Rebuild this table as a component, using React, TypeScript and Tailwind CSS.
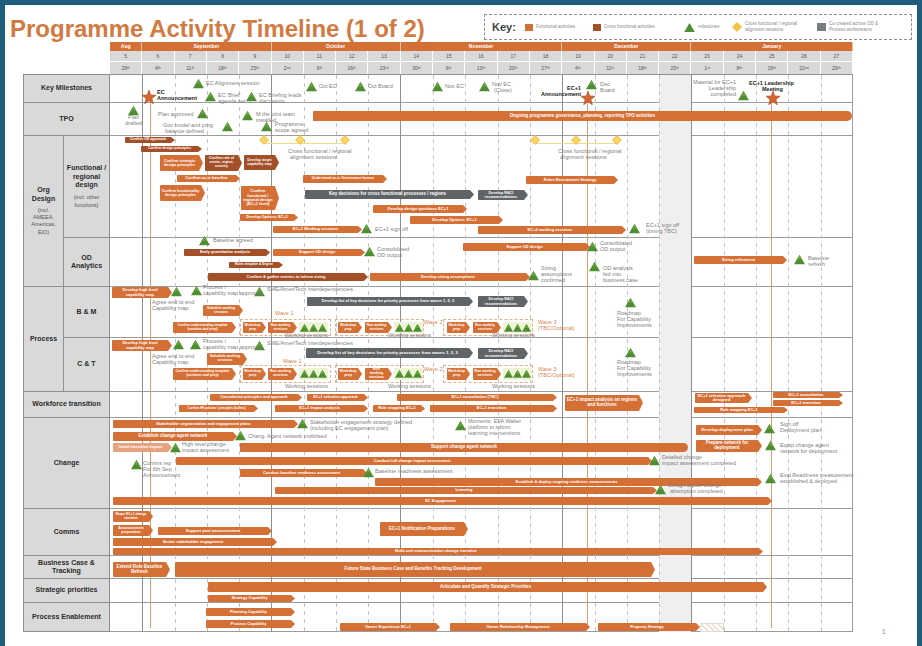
import React from 'react';

const X0 = 110;
const Y0 = 75;
const TW = 743;
const CW = TW / 23;

type C = 'o' | 'b' | 'g' | 'l';
type S = 'a' | 'r' | 'f';
type Bar = [number, number, number, number, C, string, S?];
type Txt = [number, number, string, ('g' | 'k' | 'o' | 'R')?];
type Pt = [number, number, number?];

const colorCls: Record<C, string> = {
  o: 'bg-[#d46f36]',
  b: 'bg-[#a34f28]',
  g: 'bg-[#606467]',
  l: 'bg-[#e6a27e]',
};

const months: [string, number][] = [
  ['Aug', 1],
  ['September', 4],
  ['October', 4],
  ['November', 5],
  ['December', 4],
  ['January', 5],
];
const spanCls: Record<number, string> = { 1: 'col-span-1', 4: 'col-span-4', 5: 'col-span-5' };
const weeks = Array.from({ length: 23 }, (_, i) => i + 5);
const dates: [string, string][] = [
  ['28', 'th'], ['4', 'th'], ['11', 'th'], ['18', 'th'], ['25', 'th'], ['2', 'nd'], ['9', 'th'], ['16', 'th'],
  ['23', 'rd'], ['30', 'th'], ['6', 'th'], ['13', 'th'], ['20', 'th'], ['27', 'th'], ['4', 'th'], ['11', 'th'],
  ['18', 'th'], ['25', 'th'], ['1', 'st'], ['8', 'th'], ['15', 'th'], ['22', 'nd'], ['29', 'th'],
];

const waveRow = (y1: number, y2: number): Bar[] => [
  [173, 236, y1, y2, 'o', 'Confirm understanding template (contains and prep)'],
  [243, 266, y1, y2, 'o', 'Workshop prep'],
  [268, 297, y1, y2, 'o', 'Run working sessions'],
  [338, 362, y1, y2, 'o', 'Workshop prep'],
  [365, 392, y1, y2, 'o', 'Run working sessions'],
  [447, 470, y1, y2, 'o', 'Workshop prep'],
  [473, 501, y1, y2, 'o', 'Run working sessions'],
];
const waveTris = (y: number): Pt[] => [304, 313, 322, 399, 408, 417, 508, 517, 526].map((x) => [x, y, 9] as Pt);
const waveBoxes = (y1: number, y2: number): [number, number, number, number][] =>
  [[240, 331], [335, 424], [443, 533]].map(([a, b]) => [a, b, y1 - 3, y2 + 3] as [number, number, number, number]);
const waveGreen = (y1: number, y2: number): [number, number, number, number][] =>
  [[299, 328], [394, 423], [503, 532]].map(([a, b]) => [a, b, y1, y2] as [number, number, number, number]);

const bars: Bar[] = [
  // TPO
  [313, 852, 111, 121, 'o', 'Ongoing programme governance, planning, reporting TPO activities', 'r'],
  // Functional / regional design
  [125, 175, 137, 143, 'b', 'Confirm OD approach'],
  [141, 202, 146, 152, 'b', 'Confirm design principles'],
  [160, 203, 155, 171, 'o', 'Confirm strategic design principles'],
  [205, 242, 155, 171, 'b', 'Confirm role of centre, region, country'],
  [244, 279, 155, 170, 'b', 'Develop target capability map'],
  [177, 240, 175, 182, 'o', 'Confirm as-is baseline'],
  [160, 205, 185, 201, 'o', 'Confirm functionality design principles'],
  [241, 279, 186, 210, 'o', 'Confirm functional / regional design (EC+1 level)'],
  [240, 298, 214, 221, 'o', 'Develop Options: EC+1'],
  [273, 362, 226, 233, 'o', 'EC+1 Working sessions'],
  [303, 387, 175, 183, 'o', 'Understand as-is Governance forums'],
  [305, 474, 190, 199, 'g', 'Key decisions for cross functional processes / regions'],
  [478, 528, 190, 200, 'g', 'Develop RACI recommendations'],
  [373, 467, 205, 213, 'o', 'Develop design questions EC+1'],
  [410, 503, 216, 224, 'o', 'Develop Options: EC+1'],
  [478, 626, 226, 234, 'o', 'EC+2 working sessions'],
  [526, 618, 176, 184, 'o', 'Roles Recruitment Strategy'],
  // OD analytics
  [184, 270, 249, 256, 'b', 'Early quantitative analysis'],
  [273, 365, 249, 256, 'o', 'Support OD design'],
  [229, 283, 262, 268, 'b', 'Rules template & Engine'],
  [208, 368, 273, 281, 'b', 'Confirm & gather metrics to inform sizing'],
  [370, 530, 273, 281, 'o', 'Develop sizing assumptions'],
  [463, 590, 243, 251, 'o', 'Support OD design'],
  [694, 787, 256, 264, 'o', 'Sizing refinement'],
  // B & M
  [112, 172, 287, 298, 'o', 'Develop high level capability map'],
  [203, 243, 305, 316, 'o', 'Schedule working sessions'],
  [307, 473, 297, 306, 'g', 'Develop list of key decisions for priority processes from waves 1, 2, 3'],
  [478, 528, 296, 307, 'g', 'Develop RACI recommendations'],
  ...waveRow(322, 333),
  // C & T
  [112, 172, 340, 351, 'o', 'Develop high level capability map'],
  [207, 247, 353, 365, 'o', 'Schedule working sessions'],
  [306, 473, 348, 358, 'g', 'Develop list of key decisions for priority processes from waves 1, 2, 3'],
  [478, 528, 348, 359, 'g', 'Develop RACI recommendations'],
  ...waveRow(368, 380),
  // Workforce transition
  [210, 302, 394, 401, 'o', 'Consultation principles and approach'],
  [307, 368, 394, 401, 'o', 'EC+1 selection approach'],
  [397, 557, 394, 401, 'o', 'EC+1 consultation (TBC)'],
  [179, 258, 405, 412, 'o', 'Confirm HR policies / principles (bullets)'],
  [275, 368, 405, 412, 'o', 'EC+1 impact analysis'],
  [373, 425, 405, 412, 'o', 'Role mapping EC+1'],
  [430, 557, 405, 412, 'o', 'EC+1 transition'],
  [565, 643, 395, 411, 'o', 'EC+1 impact analysis on regions and functions'],
  [695, 752, 393, 403, 'o', 'EC+1 selection approach designed'],
  [694, 788, 407, 413, 'o', 'Role mapping EC+1'],
  [773, 843, 392, 398, 'o', 'EC+1 consultation'],
  [773, 843, 400, 406, 'o', 'EC+1 transition'],
  // Change
  [113, 298, 420, 428, 'o', 'Stakeholder segmentation and engagement plans'],
  [113, 237, 432, 441, 'o', 'Establish change agent network'],
  [113, 172, 443, 452, 'l', 'Initial transition impact'],
  [240, 688, 443, 452, 'o', 'Support change agent network', 'r'],
  [176, 652, 457, 465, 'o', 'Conduct full change impact assessment'],
  [240, 367, 469, 477, 'o', 'Conduct baseline readiness assessment'],
  [375, 762, 478, 486, 'o', 'Establish & deploy ongoing readiness measurements'],
  [275, 657, 487, 494, 'o', 'Learning'],
  [113, 772, 497, 505, 'o', 'EC Engagement'],
  [696, 762, 425, 435, 'o', 'Develop deployment plan'],
  [696, 762, 440, 452, 'o', 'Prepare network for deployment'],
  // Comms
  [113, 153, 511, 522, 'o', 'Shape EC+1 change narrative'],
  [113, 153, 525, 536, 'o', 'Announcement preparation'],
  [158, 272, 527, 535, 'o', 'Support post announcement'],
  [113, 277, 538, 546, 'o', 'Senior stakeholder engagement'],
  [380, 468, 522, 536, 'o', 'EC+1 Notification Preparations'],
  [113, 763, 548, 555, 'o', 'Multi-unit communication change narrative'],
  // Business case
  [113, 170, 562, 577, 'o', 'Extend Role Baseline Refresh'],
  [175, 655, 562, 577, 'o', 'Future State Business Case and Benefits Tracking Development'],
  // Strategic priorities
  [208, 767, 582, 592, 'o', 'Articulate and Quantify Strategic Priorities'],
  [208, 295, 595, 602, 'o', 'Strategy Capability'],
  // Process enablement
  [206, 295, 608, 616, 'o', 'Planning Capability'],
  [206, 295, 620, 628, 'o', 'Process Capability'],
  [340, 440, 623, 631, 'o', 'Owner Experience EC+1'],
  [450, 590, 623, 631, 'o', 'Owner Relationship Management'],
  [598, 700, 623, 631, 'o', 'Property Strategy'],
];

const tris: Pt[] = [
  [198, 84], [210, 97], [251, 97], [311, 87], [360, 87], [437, 87], [484, 87], [591, 85], [743, 96],
  [133, 111], [202, 114], [247, 116], [227, 127], [266, 127],
  [366, 229], [634, 229],
  [204, 241], [369, 252], [592, 247], [594, 267], [533, 276], [799, 260],
  [176, 292], [196, 291], [259, 292], [630, 303],
  [178, 345], [195, 345], [259, 346], [630, 353],
  ...waveTris(328),
  ...waveTris(374),
  [302, 424], [240, 436], [175, 448], [136, 465], [460, 426], [654, 461], [368, 473], [660, 490],
  [769, 429], [770, 446], [770, 479],
];

const stars: [number, number][] = [[149, 97], [588, 98], [773, 98]];
const diamonds: [number, number][] = [[264, 140], [300, 140], [345, 140], [535, 140], [576, 140], [617, 140]];

const texts: Txt[] = [
  [206, 81, 'EC Alignment session'],
  [157, 90, 'EC', 'k'], [157, 96, 'Announcement', 'k'],
  [218, 93, "EC 'Brief'"], [218, 99, 'agenda set'],
  [259, 93, 'EC Briefing leads'], [259, 99, 'discussion'],
  [319, 84, 'Oct EC'], [368, 84, 'Oct Board'], [445, 84, 'Nov EC'], [492, 82, 'Nov EC'], [494, 88, '(Close)'],
  [567, 86, 'EC+1', 'k'], [541, 92, 'Announcement', 'k'],
  [600, 82, 'Dec'], [600, 88, 'Board'],
  [736, 80, 'Material for EC+1', 'R'], [736, 86, 'Leadership', 'R'], [736, 92, 'completed', 'R'],
  [749, 81, 'EC+1 Leadership', 'k'], [762, 87, 'Meeting', 'k'],
  [128, 115, 'Plan'], [125, 121, 'drafted'],
  [158, 112, 'Plan approved'],
  [256, 112, 'M the joint team'], [256, 118, 'installed'],
  [163, 123, 'Gov model and prog'], [165, 129, 'balance defined'],
  [275, 122, 'Programme'], [275, 128, 'scope agreed'],
  [288, 149, 'Cross functional / regional'], [290, 155, 'alignment sessions'],
  [558, 149, 'Cross functional / regional'], [560, 155, 'alignment sessions'],
  [375, 227, 'EC+1 sign off'],
  [646, 223, 'EC+1 sign off'], [646, 229, '(timing TBC)'],
  [213, 238, 'Baseline agreed'],
  [377, 247, 'Consolidated'], [377, 253, 'OD output'],
  [600, 241, 'Consolidated'], [600, 247, 'OD output'],
  [541, 266, 'Sizing'], [541, 272, 'assumptions'], [541, 278, 'confirmed'],
  [603, 266, 'OD analysis'], [603, 272, 'fed into'], [603, 278, 'business case'],
  [808, 256, 'Baseline'], [808, 262, 'refresh'],
  [203, 285, 'Process /'], [203, 291, 'capability map approved'],
  [267, 287, 'SME/AmeriTech interdependencies'],
  [152, 300, 'Agree end to end'], [152, 306, 'Capability map'],
  [275, 311, 'Wave 1', 'o'], [424, 320, 'Wave 2', 'o'], [538, 320, 'Wave 3', 'o'], [538, 326, '(TBC/Optional)', 'o'],
  [285, 333, 'Working sessions'], [388, 333, 'Working sessions'], [492, 333, 'Working sessions'],
  [617, 311, 'Roadmap'], [617, 317, 'For Capability'], [617, 323, 'Improvements'],
  [203, 339, 'Process /'], [203, 345, 'capability map approved'],
  [267, 341, 'SME/AmeriTech interdependencies'],
  [152, 354, 'Agree end to end'], [152, 360, 'Capability map'],
  [283, 359, 'Wave 1', 'o'], [424, 367, 'Wave 2', 'o'], [538, 367, 'Wave 3', 'o'], [538, 373, '(TBC/Optional)', 'o'],
  [285, 384, 'Working sessions'], [388, 384, 'Working sessions'], [492, 384, 'Working sessions'],
  [617, 360, 'Roadmap'], [617, 366, 'For Capability'], [617, 372, 'Improvements'],
  [310, 420, 'Stakeholder engagement strategy defined'], [310, 426, '(including EC engagement plan)'],
  [248, 434, 'Chang. Agent network mobilised'],
  [182, 442, 'High level change'], [182, 448, 'impact assessment'],
  [143, 461, 'Comms rep'], [143, 467, 'For 6th Sep'], [143, 473, 'Announcement'],
  [468, 419, 'Moments: EVA Walter'], [468, 425, 'platform to inform'], [468, 431, 'learning interventions'],
  [662, 455, 'Detailed change'], [662, 461, 'impact assessment completed'],
  [375, 469, 'Baseline readiness assessment'],
  [668, 483, 'Design & plan change'], [670, 489, 'absorption completed'],
  [780, 422, 'Sign off'], [780, 428, 'Deployment plan'],
  [780, 443, 'Equip change agent'], [780, 449, 'network for deployment'],
  [780, 473, 'Eval Readiness measurement'], [780, 479, 'established & deployed'],
];

function fitSize(t: string, w: number, h: number, pad: number): number {
  for (let fs = 4.5; fs > 2.6; fs -= 0.25) {
    const lines = Math.max(1, Math.floor(h / (fs * 1.12)));
    const need = t.length * fs * 0.56;
    const factor = lines > 1 ? 0.72 : 0.92;
    if (need <= (w - pad) * lines * factor) return fs;
  }
  return 2.75;
}

function BarEl({ b }: { b: Bar }) {
  const [x1, x2, y1, y2, c, t, s = 'a'] = b;
  const h = y2 - y1;
  const w = x2 - x1;
  const shape =
    s === 'a'
      ? '[clip-path:polygon(0_0,calc(100%_-_4px)_0,100%_50%,calc(100%_-_4px)_100%,0_100%)] pr-[5px] pl-[1px] rounded-l-[1px]'
      : s === 'r'
      ? 'rounded-r-[6px] rounded-l-[1px] px-[2px]'
      : 'px-[1px]';
  const fs = Math.min(h < 9 ? 4 : 4.5, fitSize(t, w, h, s === 'a' ? 7 : 4));
  return (
    <div
      className={`absolute flex items-center justify-center overflow-hidden text-center font-bold leading-[1.1] text-white ${colorCls[c]} ${shape}`}
      style={{ left: x1 - X0, top: y1 - Y0, width: w, height: h, fontSize: fs }}
    >
      {t}
    </div>
  );
}

function TxtEl({ t }: { t: Txt }) {
  const [x, y, s, k = 'g'] = t;
  const cls =
    k === 'k'
      ? 'font-bold text-[#222222] text-[5.5px]'
      : k === 'o'
      ? 'text-[#d9824f] text-[5.5px]'
      : 'text-[#808080] text-[5.5px]';
  const style = k === 'R' ? { right: TW - (x - X0), top: y - Y0 } : { left: x - X0, top: y - Y0 };
  return (
    <div className={`absolute whitespace-nowrap leading-none ${cls}`} style={style}>
      {s}
    </div>
  );
}

function Tri({ p }: { p: Pt }) {
  const [x, y, w = 11] = p;
  const h = w * 0.85;
  return (
    <svg className="absolute" style={{ left: x - X0 - w / 2, top: y - Y0 - h / 2 }} width={w} height={h} viewBox="0 0 10 8.5">
      <path d="M5 0 L10 8.5 L0 8.5Z" fill="#4f8d31" />
      <path d="M5 0 L7.5 4.25 L2.5 4.25Z" fill="#62a23f" />
    </svg>
  );
}

function Star({ x, y }: { x: number; y: number }) {
  return (
    <svg className="absolute" style={{ left: x - X0 - 7, top: y - Y0 - 7 }} width="14" height="14" viewBox="0 0 12 12">
      <polygon
        points="6,0 7.5,4.2 12,4.5 8.5,7.3 9.7,11.8 6,9.2 2.3,11.8 3.5,7.3 0,4.5 4.5,4.2"
        fill="#d5652f"
        stroke="#a8461c"
        strokeWidth="0.5"
      />
    </svg>
  );
}

function Diamond({ x, y }: { x: number; y: number }) {
  return (
    <svg className="absolute" style={{ left: x - X0 - 5, top: y - Y0 - 5 }} width="10" height="10" viewBox="0 0 10 10">
      <polygon points="5,0 10,5 5,10 0,5" fill="#f4c445" />
      <polygon points="5,1.5 8.5,5 5,8.5 1.5,5" fill="#f8d66a" />
    </svg>
  );
}

function Key() {
  return (
    <div className="ml-auto mr-[5px] mt-[9px] flex h-[26px] w-[428px] items-center border border-dashed border-[#8f8f8f] pl-[7px] text-[4.5px] leading-[1.25] text-[#8a8a8a]">
      <span className="w-[33px] text-[11px] font-bold leading-none text-[#404040]">Key:</span>
      <span className="h-[7px] w-[8px] bg-[#d46f36]" />
      <span className="ml-[3px] w-[57px]">Functional activities</span>
      <span className="h-[7px] w-[8px] bg-[#a34f28]" />
      <span className="ml-[3px] w-[80px]">Cross functional activities</span>
      <svg width="11" height="9" viewBox="0 0 10 8.5">
        <path d="M5 0 L10 8.5 L0 8.5Z" fill="#4f8d31" />
      </svg>
      <span className="ml-[3px] w-[34px]">milestones</span>
      <svg width="10" height="10" viewBox="0 0 10 10">
        <polygon points="5,0 10,5 5,10 0,5" fill="#f4c445" />
      </svg>
      <span className="ml-[3px] w-[72px]">
        Cross functional / regional
        <br />
        alignment sessions
      </span>
      <span className="h-[8px] w-[9px] bg-[#7a7d80]" />
      <span className="ml-[3px]">
        Co-created across OD &amp;
        <br />
        Process workstreams
      </span>
    </div>
  );
}

function Header() {
  return (
    <div className="flex flex-col">
      <div className="flex h-[9px]">
        <div className="w-[87px]" />
        <div className="grid w-[743px] grid-cols-[repeat(23,minmax(0,1fr))] bg-[#d46f36]">
          {months.map(([m, n]) => (
            <div key={m} className={`${spanCls[n]} border-r border-[#f0c0a0] text-center text-[5px] font-bold leading-[9px] text-white`}>
              {m}
            </div>
          ))}
        </div>
      </div>
      <div className="flex h-[11px]">
        <div className="w-[87px]" />
        <div className="grid w-[743px] grid-cols-[repeat(23,minmax(0,1fr))]">
          {weeks.map((w) => (
            <div key={w} className="border-r border-b border-white bg-[#d9d9d9] text-center text-[5px] leading-[10px] text-[#555555]">
              {w}
            </div>
          ))}
        </div>
      </div>
      <div className="flex h-[12px]">
        <div className="w-[87px]" />
        <div className="grid w-[743px] grid-cols-[repeat(23,minmax(0,1fr))]">
          {dates.map(([d, s], i) => (
            <div key={i} className="border-r border-white bg-[#d9d9d9] text-center text-[5px] leading-[12px] text-[#555555]">
              {d}
              <span className="align-top text-[3.5px]">{s}</span>
            </div>
          ))}
        </div>
      </div>
    </div>
  );
}

const lab = 'flex flex-col items-center justify-center text-center bg-[#d9d9d9] border-r border-b border-[#8f8f8f] text-[7px] font-bold text-[#2b2b2b] leading-[1.2]';
const rowStarts = [
  'row-start-1', 'row-start-2', 'row-start-3', 'row-start-4', 'row-start-5', 'row-start-6',
  'row-start-7', 'row-start-8', 'row-start-9', 'row-start-10', 'row-start-11', 'row-start-12',
];

function Overlay() {
  const monthBounds = [1, 5, 9, 14, 18];
  return (
    <div className="pointer-events-none absolute left-[87px] top-0 bottom-0 w-[743px]">
      <div className="absolute top-0 bottom-0 bg-[#efefef]" style={{ left: 17 * CW, width: CW }} />
      {Array.from({ length: 22 }, (_, i) => i + 1).map((i) =>
        monthBounds.includes(i) ? (
          <div key={i} className="absolute top-0 bottom-0 w-[1.5px] bg-[#8e8e8e]" style={{ left: i * CW - 0.75 }} />
        ) : (
          <div
            key={i}
            className="absolute top-0 bottom-0 w-px bg-[repeating-linear-gradient(to_bottom,#c4c4c4_0_4px,transparent_4px_8px)]"
            style={{ left: i * CW }}
          />
        )
      )}
      {[150, 587, 771].map((x) => (
        <div key={x} className="absolute w-px bg-[#df9b72]" style={{ left: x - X0, top: 103 - Y0, height: 525 }} />
      ))}
      {[[264, 345], [535, 617]].map(([a, b]) => (
        <div key={a} className="absolute h-px bg-[#f3d98a]" style={{ left: a - X0, width: b - a, top: 143 - Y0 }} />
      ))}
      {[...waveBoxes(322, 333), ...waveBoxes(368, 380)].map(([a, b, c, d], i) => (
        <div
          key={'wb' + i}
          className="absolute border border-dashed border-[#e6b08c]"
          style={{ left: a - X0, width: b - a, top: c - Y0, height: d - c }}
        />
      ))}
      {[...waveGreen(322, 333), ...waveGreen(368, 380)].map(([a, b, c, d], i) => (
        <div key={'wg' + i} className="absolute bg-[#eef5d6]" style={{ left: a - X0, width: b - a, top: c - Y0, height: d - c }} />
      ))}
      <div
        className="absolute border border-[#dddddd] bg-[repeating-linear-gradient(45deg,#f3e3d8_0_2px,#ffffff_2px_4px)]"
        style={{ left: 700 - X0, width: 24, top: 623 - Y0, height: 9 }}
      />
      {bars.map((b, i) => (
        <BarEl key={'b' + i} b={b} />
      ))}
      {diamonds.map(([x, y], i) => (
        <Diamond key={'d' + i} x={x} y={y} />
      ))}
      {tris.map((p, i) => (
        <Tri key={'t' + i} p={p} />
      ))}
      {stars.map(([x, y], i) => (
        <Star key={'s' + i} x={x} y={y} />
      ))}
      {texts.map((t, i) => (
        <TxtEl key={'x' + i} t={t} />
      ))}
    </div>
  );
}

function Body() {
  return (
    <div className="relative grid w-[830px] grid-cols-[41px_46px_743px] grid-rows-[28px_33px_102px_49px_51px_54px_26px_91px_47px_23px_24px_29px] border-t border-[#8f8f8f]">
      <div className={`${lab} col-span-2 col-start-1 row-start-1 border-l`}>Key Milestones</div>
      <div className={`${lab} col-span-2 col-start-1 row-start-2 border-l`}>TPO</div>
      <div className={`${lab} col-start-1 row-start-3 row-span-2 border-l`}>
        <span>Org</span>
        <span>Design</span>
        <span className="mt-[4px] text-[5.5px] font-normal leading-[1.3] text-[#555555]">
          (incl.
          <br />
          AMEEA,
          <br />
          Americas,
          <br />
          EiO)
        </span>
      </div>
      <div className={`${lab} col-start-2 row-start-3`}>
        <span>Functional /</span>
        <span>regional</span>
        <span>design</span>
        <span className="mt-[5px] text-[5.5px] font-normal leading-[1.3] text-[#555555]">
          (incl. other
          <br />
          functions)
        </span>
      </div>
      <div className={`${lab} col-start-2 row-start-4`}>
        <span>OD</span>
        <span>Analytics</span>
      </div>
      <div className={`${lab} col-start-1 row-start-5 row-span-2 border-l`}>Process</div>
      <div className={`${lab} col-start-2 row-start-5`}>B &amp; M</div>
      <div className={`${lab} col-start-2 row-start-6`}>C &amp; T</div>
      <div className={`${lab} col-span-2 col-start-1 row-start-7 border-l`}>Workforce transition</div>
      <div className={`${lab} col-span-2 col-start-1 row-start-8 border-l`}>Change</div>
      <div className={`${lab} col-span-2 col-start-1 row-start-9 border-l`}>Comms</div>
      <div className={`${lab} col-span-2 col-start-1 row-start-10 border-l`}>
        <span>Business Case &amp;</span>
        <span>Tracking</span>
      </div>
      <div className={`${lab} col-span-2 col-start-1 row-start-11 border-l`}>Strategic priorities</div>
      <div className={`${lab} col-span-2 col-start-1 row-start-12 border-l`}>Process Enablement</div>
      {rowStarts.map((r) => (
        <div key={r} className={`col-start-3 ${r} border-r border-b border-[#9c9c9c] bg-white`} />
      ))}
      <Overlay />
    </div>
  );
}

export default function App() {
  return (
    <div className="h-[646px] w-[922px] overflow-hidden bg-[#1e5d7b] pt-[5px] pl-[5px] pr-[5px] font-['Liberation_Sans',Arial,sans-serif]">
      <div className="relative h-full bg-white">
        <div className="flex h-[37px]">
          <h1 className="whitespace-nowrap pl-[5px] pt-[12px] text-[24px] font-bold leading-[24px] text-[#d27a3f]">
            Programme Activity Timeline (1 of 2)
          </h1>
          <Key />
        </div>
        <div className="ml-[18px] w-[830px]">
          <Header />
          <Body />
        </div>
        <div className="absolute bottom-[8px] right-[31px] text-[8px] text-[#9a9a9a]">1</div>
      </div>
    </div>
  );
}
